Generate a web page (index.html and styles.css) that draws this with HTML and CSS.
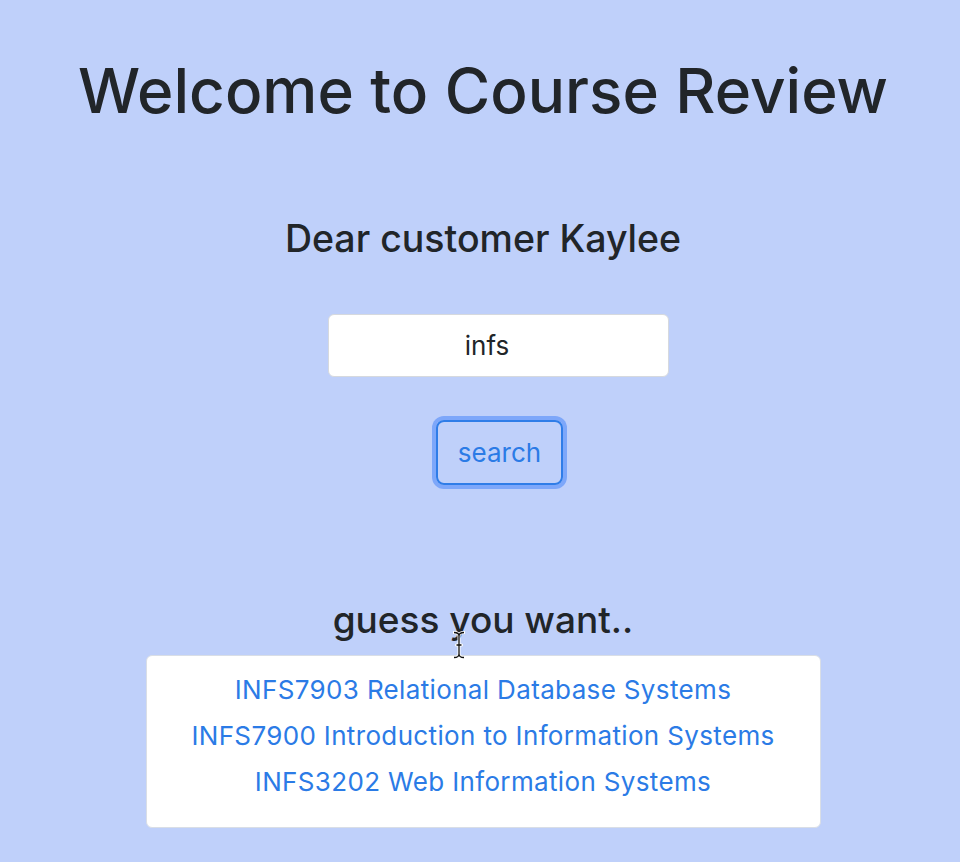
FILE: index.html
```html
<!DOCTYPE html>
<html lang="en">
<head>
<meta charset="utf-8">
<title>Course Review</title>
<link rel="stylesheet" href="styles.css">
</head>
<body>
<main class="page">
  <h1 class="title">Welcome to Course Review</h1>
  <h2 class="greeting">Dear customer Kaylee</h2>
  <form class="search">
    <input class="search-input" type="text" value="infs">
    <button class="search-btn" type="button">search</button>
  </form>
  <h2 class="guess">guess you want..</h2>
  <div class="suggestions">
    <a class="course" href="#">INFS7903 Relational Database Systems</a>
    <a class="course" href="#">INFS7900 Introduction to Information Systems</a>
    <a class="course" href="#">INFS3202 Web Information Systems</a>
  </div>
  <svg class="cursor" width="12" height="28" viewBox="0 0 12 28" aria-hidden="true">
    <path d="M1 1.5 Q6 1.5 6 5 Q6 1.5 11 1.5 M6 5 V23 M1 26.5 Q6 26.5 6 23 Q6 26.5 11 26.5 M3.5 14 H8.5" fill="none" stroke="#fff" stroke-width="3" stroke-linecap="round"/>
    <path d="M1 1.5 Q6 1.5 6 5 Q6 1.5 11 1.5 M6 5 V23 M1 26.5 Q6 26.5 6 23 Q6 26.5 11 26.5 M3.5 14 H8.5" fill="none" stroke="#111" stroke-width="1.3"/>
  </svg>
</main>
</body>
</html>
```

FILE: styles.css
```css
* { box-sizing: border-box; }
html, body { margin: 0; padding: 0; }
body {
  background: #bfd0fa;
  font-family: Inter, "Noto Sans", "Liberation Sans", sans-serif;
  color: #212529;
  height: 862px;
  overflow: hidden;
}
.page {
  position: relative;
  display: flex;
  flex-direction: column;
  align-items: center;
  text-align: center;
  padding-top: 54px;
  padding-left: 6px;
}
.title {
  margin: 0;
  font-size: 62px;
  font-weight: 500;
  line-height: 1.2;
}
.greeting {
  margin: 88px 0 0;
  font-size: 37.5px;
  font-weight: 500;
  line-height: 1.2;
}
.search {
  display: flex;
  flex-direction: column;
  align-items: center;
  margin-top: 53px;
  margin-left: 31px;
}
.search-input {
  width: 341px;
  height: 63px;
  padding: 0 23px 0 0;
  border: 1px solid #d6d9de;
  border-radius: 6px;
  background: #fff;
  text-align: center;
  font-family: inherit;
  font-size: 26px;
  color: #212529;
  outline: none;
}
.search-btn {
  margin: 43px 0 0 2px;
  width: 127px;
  height: 65px;
  border: 2px solid #2f7de8;
  border-radius: 8px;
  background: transparent;
  color: #2b7be6;
  font-family: inherit;
  font-size: 26px;
  box-shadow: 0 0 0 4px rgba(60, 125, 250, 0.5);
}
.guess {
  margin: 113px 0 0;
  font-size: 37px;
  font-weight: 500;
  line-height: 1.2;
}
.suggestions {
  margin-top: 12px;
  width: 675px;
  height: 173px;
  background: #fff;
  border: 1px solid #d9dee6;
  border-radius: 6px;
  display: flex;
  flex-direction: column;
  align-items: center;
  padding-top: 11px;
}
.course {
  color: #2b7be6;
  text-decoration: none;
  font-size: 26px;
  letter-spacing: 0.35px;
  line-height: 46px;
}
.cursor {
  position: absolute;
  left: 453px;
  top: 631px;
}
```
